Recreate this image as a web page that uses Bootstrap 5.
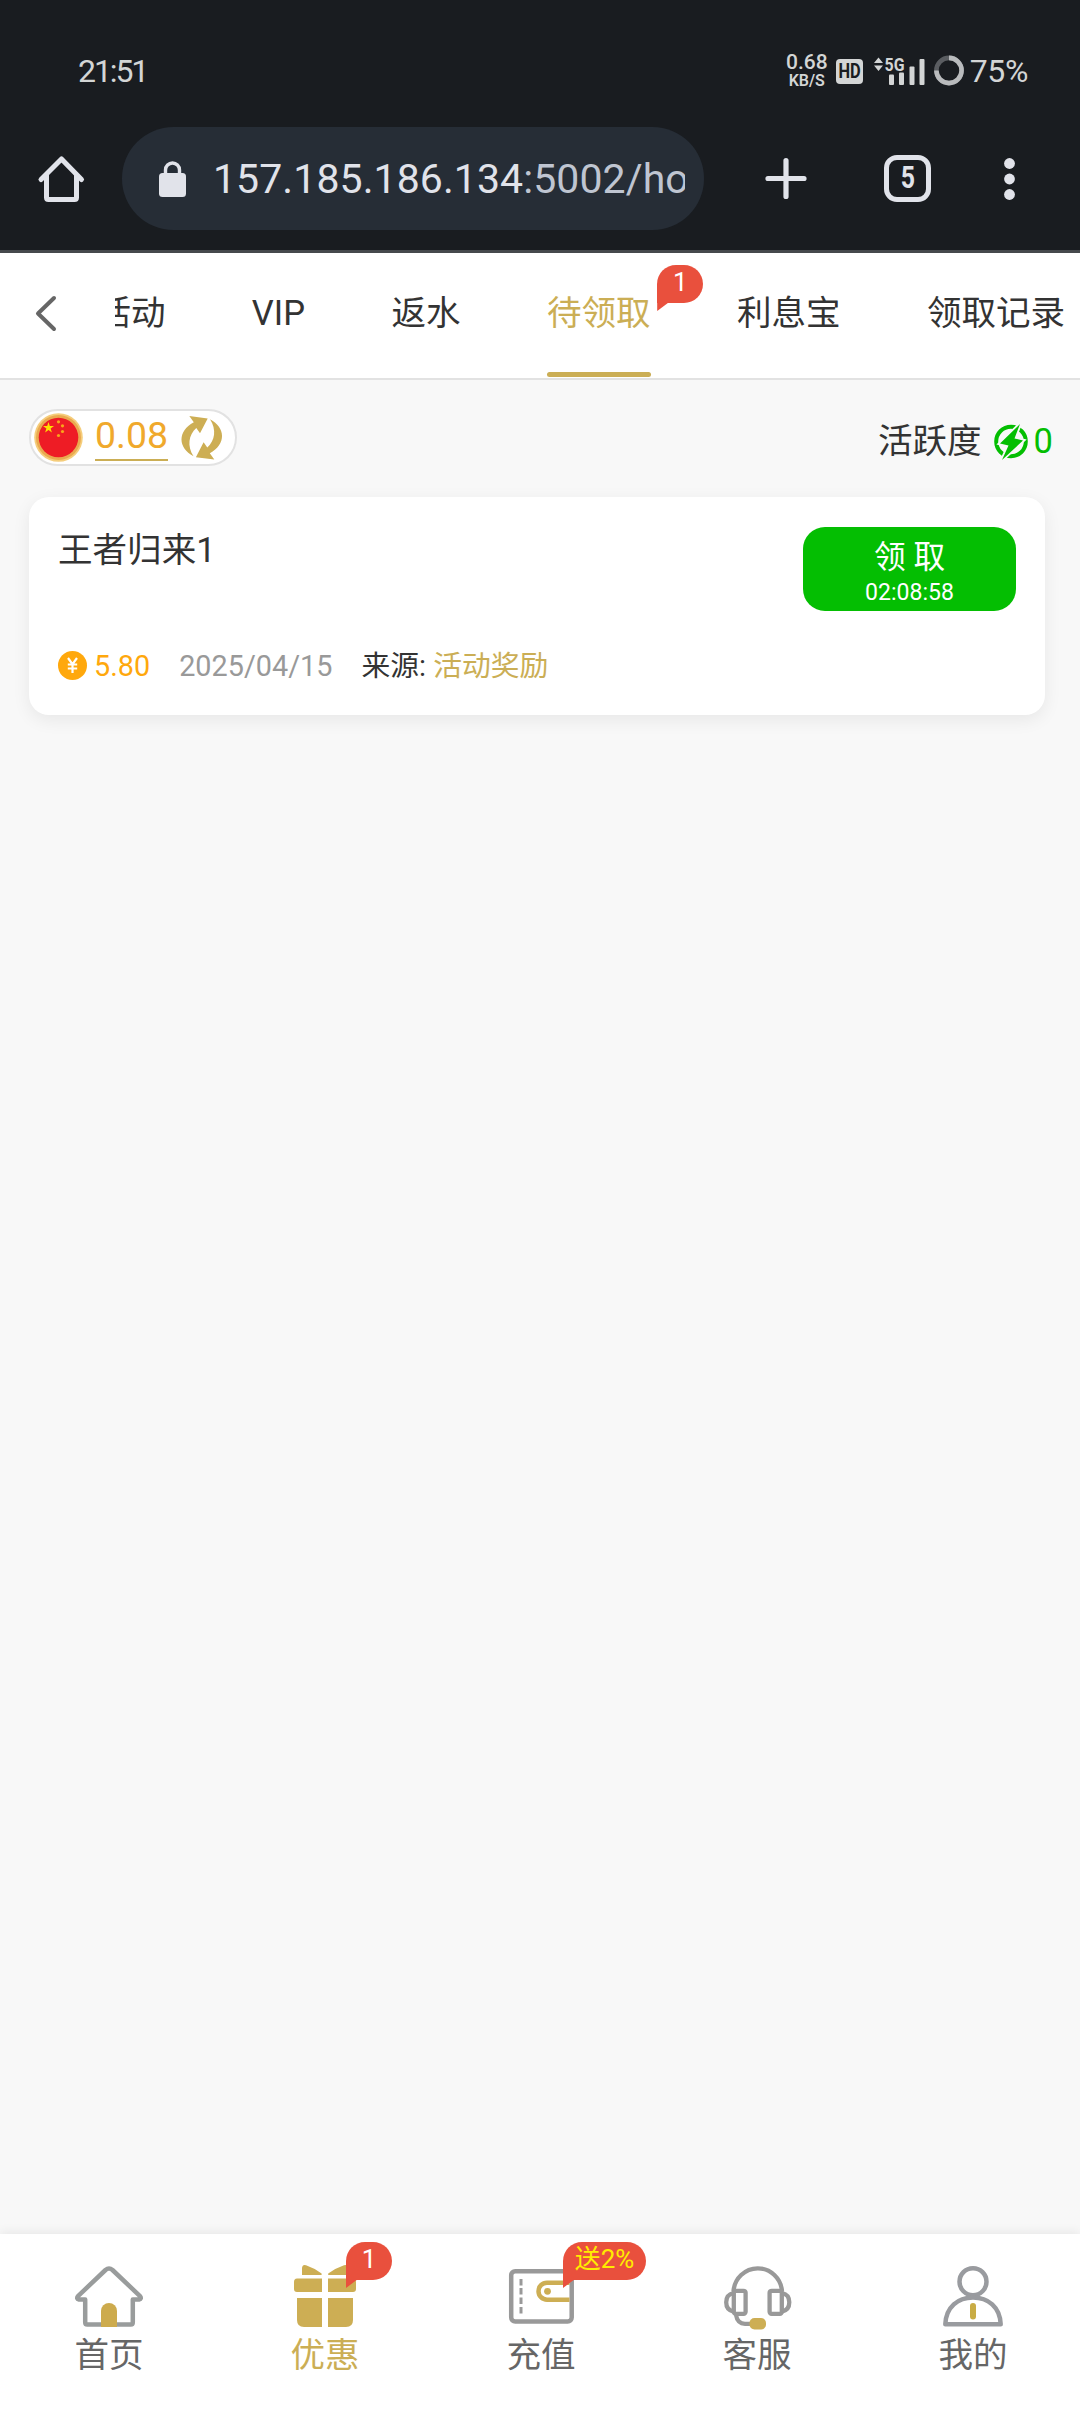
<!DOCTYPE html>
<html lang="zh-CN">
<head>
<meta charset="utf-8">
<meta name="viewport" content="width=device-width, initial-scale=1">
<title>待领取</title>
<link rel="stylesheet" href="https://cdn.jsdelivr.net/npm/bootstrap@5.3.0/dist/css/bootstrap.min.css">
<style>
:root { --gold: #cbae55; --ink: #333; }
body { font-family: Roboto, "Noto Sans CJK SC", sans-serif; font-size: 34.56px; line-height: 1.2; color: var(--ink); background: #f8f8f8; height: 2412px; overflow: hidden; }
svg { display: block; flex: none; overflow: visible; }
.gold { color: var(--gold); }

.browser-top { background: #191c20; border-bottom: 3px solid #46494d; height: 253px; color: #d3d5d5; }
.status { height: 127px; padding: 15px 52px 0 78px; }
.clock { font-size: 32px; letter-spacing: -2.1px; }
.net { font-size: 21px; line-height: 17px; width: 44px; font-weight: 500; text-align: center; margin-right: 7px; }
.net small { font-size: 16px; line-height: 15px; display: block; font-weight: 600; margin-top: 2px; }
.hd { width: 27px; height: 25px; border-radius: 4px; background: #d3d5d5; color: #191c20; font-size: 20px; font-weight: 700; line-height: 25px; margin-right: 11px; }
.hd span { display: inline-block; transform: scaleX(.82); transform-origin: center; margin: 0 -4px; }
.pct { font-size: 32px; letter-spacing: -.4px; margin-left: 6px; }
.toolbar { height: 103px; padding-left: 38px; }
.omni { margin-left: 38px; width: 582px; height: 103px; border-radius: 52px; background: #262d36; padding: 0 19px 0 37px; }
.url { font-size: 41px; margin-left: 27px; padding-top: 2px; color: #bfc5d1; white-space: nowrap; overflow: hidden; letter-spacing: .08px; }
.url b { font-weight: 400; color: #e1e3ea; }
.tabcount { width: 47px; height: 47px; border: 5px solid #e1e3ea; border-radius: 13px; color: #e1e3ea; font-size: 31px; font-weight: 700; line-height: 35px; }
.tabcount span { display: inline-block; transform: scaleX(.8); }

.page-tabs { height: 127px; background: #fff; border-bottom: 2px solid #e2e2e2; }
.back { width: 115px; padding: 0 0 5px 36px; }
.tab-clip { overflow: hidden; height: 125px; }
.tab-strip { margin-left: -61.8px; }
.tab-strip .nav-link { height: 125px; padding: 0 43.2px 4px; color: var(--ink); white-space: nowrap; display: flex; align-items: center; position: relative; }
.tab-strip .nav-link.active { color: var(--gold); }
.tab-strip .nav-link.active::after { content: ""; position: absolute; left: 43px; right: 43px; bottom: 1px; height: 5px; border-radius: 3px; background: var(--gold); }
.bubble { position: absolute; background: #e9503d; color: #fff; font-size: 26px; height: 38px; line-height: 34px; min-width: 46px; text-align: center; border-radius: 19px 19px 19px 0; }
.bubble::after { content: ""; position: absolute; left: 0; top: 37px; width: 12px; height: 9px; background: inherit; clip-path: polygon(0 0, 100% 0, 0 100%); }
.tab-strip .bubble { left: 153.5px; top: 12px; }

.summary { padding: 29px 27px 0 29px; }
.purse { width: 208px; height: 57px; border: 2px solid #e2e2e2; border-radius: 29px; background: #fff; padding: 0 12px 0 3px; }
.balance { font-size: 37.44px; line-height: 43px; border-bottom: 2.5px solid var(--gold); color: #f0a92c; margin-left: 12px; height: 47px; }
.green { color: #04be02; }

.reward { margin: 31px 35px 0 29px; height: 218px; border-radius: 20px; background: #fff; box-shadow: 0 5px 18px rgba(0,0,0,.07); padding: 30px 29px 0; }
.reward-title { margin-top: 3px; }
.claim { width: 213px; height: 84px; border-radius: 22px; background: #04be02; color: #fff; padding: 9px 0 0; font-size: 31.68px; line-height: 38px; border: 0; }
.claim:hover { background: #04be02; color: #fff; }
.claim time { font-size: 23.04px; line-height: 32px; display: block; }
.reward-meta { font-size: 28.8px; line-height: 34px; margin-top: 37px; }
.reward-meta span { padding-top: 1px; }

.bottom-nav { height: 178px; background: #fff; box-shadow: 0 -2px 10px rgba(0,0,0,.07); color: #666; padding-left: 1px; }
.bottom-nav a { color: inherit; text-decoration: none; position: relative; width: 216px; padding-top: 26px; flex: none; }
.bottom-nav a.on { color: var(--gold); }
.glyph { height: 75px; padding-top: 6px; }
.bottom-nav .bubble { left: 129px; top: 8px; }
.bottom-nav .promo { color: #ffec00; font-size: 25.92px; min-width: 83px; left: 130px; line-height: 35px; }
</style>
</head>
<body class="d-flex flex-column">

<header class="browser-top flex-shrink-0">
  <div class="status d-flex align-items-center">
    <span class="clock me-auto">21:51</span>
    <div class="net">0.68<small>KB/S</small></div>
    <div class="hd text-center"><span>HD</span></div>
    <svg width="52" height="30" viewBox="0 0 52 30" fill="#d3d5d5">
      <path d="M0 7 4.500 1.500 9 7zM0 9.500h9L4.500 15z"/>
      <text x="10.500" y="14.500" font-size="19" font-weight="700" textLength="20" lengthAdjust="spacingAndGlyphs">5G</text>
      <rect x="15" y="18.500" width="5" height="10.500" rx="1"/><rect x="25" y="16.500" width="5" height="12.500" rx="1"/><rect x="35.500" y="10.500" width="5" height="18.500" rx="1"/><rect x="45.500" y="3" width="5" height="26" rx="1"/>
    </svg>
    <svg class="ms-2" width="30" height="30" viewBox="0 0 30 30" fill="none" stroke-width="4.600">
      <circle cx="15" cy="14.500" r="12.600" stroke="#5a5d61"/><path d="M15 1.900A12.600 12.600 0 1 1 2.400 14.500" stroke="#b9bbbd"/>
    </svg>
    <span class="pct">75%</span>
  </div>
  <div class="toolbar d-flex align-items-center">
    <svg width="46" height="48" viewBox="0 0 46 48" fill="none" stroke="#e1e3ea" stroke-width="5" stroke-linejoin="round" stroke-linecap="round">
      <path d="M3 24.500 23.500 4l20 20.500M8.500 20v22.500q0 2 2 2h26q2 0 2-2V20"/>
    </svg>
    <div class="omni d-flex align-items-center">
      <svg width="27" height="36" viewBox="0 0 27 36"><rect y="12" width="27" height="24" rx="3.500" fill="#e1e3ea"/><path d="M6.500 13V9a7 7 0 0 1 14 0v4" fill="none" stroke="#e1e3ea" stroke-width="3.400"/></svg>
      <div class="url"><b>157.185.186.134</b>:5002/home</div>
    </div>
    <svg style="margin-left:61px" width="42" height="42" viewBox="0 0 42 42" stroke="#e1e3ea" stroke-width="5.200" stroke-linecap="round"><path d="M21 2.500v36M3 20.500h36"/></svg>
    <div class="tabcount text-center" style="margin-left:77px"><span>5</span></div>
    <svg style="margin-left:72px" width="12" height="44" viewBox="0 0 12 44" fill="#e1e3ea"><circle cx="6.500" cy="6.500" r="5.400"/><circle cx="6.500" cy="22" r="5.400"/><circle cx="6.500" cy="37.500" r="5.400"/></svg>
  </div>
</header>

<nav class="page-tabs d-flex flex-shrink-0">
  <div class="back d-flex align-items-center flex-shrink-0">
    <svg width="21" height="35" viewBox="0 0 21 35" fill="none" stroke="#666" stroke-width="4" stroke-linecap="round" stroke-linejoin="round"><path d="M18 2 2 17.500l16 15.500"/></svg>
  </div>
  <div class="tab-clip flex-grow-1">
    <div class="tab-strip nav flex-nowrap">
      <a class="nav-link">活动</a>
      <a class="nav-link">VIP</a>
      <a class="nav-link">返水</a>
      <a class="nav-link active">待领取<span class="bubble">1</span></a>
      <a class="nav-link">利息宝</a>
      <a class="nav-link">领取记录</a>
    </div>
  </div>
</nav>

<main class="flex-grow-1">
  <div class="summary d-flex justify-content-between align-items-start">
    <div class="purse d-flex align-items-center">
      <svg width="49" height="49" viewBox="0 0 49 49">
        <circle cx="24.500" cy="24.500" r="24.300" fill="#f5cd7b"/><circle cx="24.500" cy="24.500" r="22.500" fill="#eaa94f"/><circle cx="24.500" cy="24.500" r="19.800" fill="#ee1c25"/>
        <path fill="#ffde00" d="M14.500 9l1.300 3.900h4.200l-3.400 2.500 1.300 4-3.400-2.400-3.400 2.400 1.300-4L9 12.900h4.200z"/>
        <g fill="#f9a51a"><circle cx="24.500" cy="8.800" r="1.600"/><circle cx="28.500" cy="12.800" r="1.600"/><circle cx="28.500" cy="18.500" r="1.600"/><circle cx="24.500" cy="22.500" r="1.600"/></g>
      </svg>
      <span class="balance">0.08</span>
      <svg class="ms-auto" width="42" height="44" viewBox="0 0 42 44" fill="#cdae54">
        <path id="turn" d="M8.300 0 26.700 2.400 19 17.300 15.300 12C7.500 19 6 30 12.500 40.300-3 32-4 15.500 12.800 6.300z"/>
        <use href="#turn" transform="rotate(180 20.800 21.800)"/>
      </svg>
    </div>
    <div class="d-flex align-items-center pt-2 mt-1">
      <span>活跃度</span>
      <svg style="margin-left:12px" width="34" height="36" viewBox="0 0 34 36">
        <circle cx="17" cy="17.500" r="14.800" fill="none" stroke="#04be02" stroke-width="4"/>
        <path d="M26 0 6 19.500l8.500 2L8 36 29 16.500l-8.500-2z" fill="#04be02" stroke="#f8f8f8" stroke-width="3.600" paint-order="stroke"/>
      </svg>
      <span class="green" style="margin-left:6px">0</span>
    </div>
  </div>

  <section class="reward">
    <div class="d-flex justify-content-between align-items-start">
      <div class="reward-title">王者归来1</div>
      <button class="btn claim">领 取<time>02:08:58</time></button>
    </div>
    <div class="reward-meta d-flex align-items-center">
      <svg width="29" height="29" viewBox="0 0 29 29"><circle cx="14.500" cy="14.500" r="14.500" fill="#ffa80c"/><path d="M10 7l4.500 6.200L19 7M9.800 13.500h9.400M9.800 17.500h9.400M14.500 13v9" fill="none" stroke="#fff" stroke-width="2.200"/></svg>
      <span style="color:#ffa80c;margin-left:7px">5.80</span>
      <span style="color:#999;margin-left:29px">2025/04/15</span>
      <span style="margin-left:29px">来源: <span class="gold">活动奖励</span></span>
    </div>
  </section>
</main>

<nav class="bottom-nav d-flex flex-shrink-0">
  <a class="d-flex flex-column align-items-center">
    <div class="glyph"><svg width="68" height="61" viewBox="0 0 68 61">
      <path d="M10.200 33.500H4q-3-.8-1-3.400L30.500 4q3.500-3 7 0L65 30.100q2 2.600-1 3.400h-6.200v23q0 2-2 2H12.200q-2 0-2-2z" fill="none" stroke="#999c9c" stroke-width="4.500" stroke-linejoin="round"/>
      <path d="M26 61V45a8 8 0 0 1 16 0v16z" fill="#cdab4d"/></svg></div>
    <span>首页</span>
  </a>
  <a class="on d-flex flex-column align-items-center">
    <div class="glyph"><svg width="62" height="61" viewBox="0 1 62 61" fill="#cdae54">
      <path d="M8 10V3q.5-4 4-2.700Q20 3 27.600 8.500V10zM54 10V3q-.5-4-4-2.700Q42 3 34.200 8.500V10z"/>
      <path d="M3 13.500h25V27H3q-3 0-3-3v-7q0-3.500 3-3.500zM59 13.500H34V27h25q3 0 3-3v-7q0-3.500-3-3.500zM3 33h25v29H10q-7 0-7-7zM59 33H34v29h18q7 0 7-7z"/></svg></div>
    <span>优惠</span><span class="bubble">1</span>
  </a>
  <a class="d-flex flex-column align-items-center">
    <div class="glyph"><svg width="65" height="61" viewBox="0 -3 65 61" fill="none" stroke="#999" stroke-width="4.500">
      <rect x="2.200" y="2.200" width="60.500" height="50.300" rx="4"/>
      <path d="M12 10v6.500M12 19v6.500M12 28.500V35M12 38v6.500" stroke-width="3" stroke-linecap="butt"/>
      <path d="M60.500 13.700H38a8.500 8.500 0 0 0 0 17h22.500" stroke="#cdae54"/><circle cx="38.500" cy="22.300" r="3.400" fill="#cdae54" stroke="none"/></svg></div>
    <span>充值</span><span class="bubble promo">送2%</span>
  </a>
  <a class="d-flex flex-column align-items-center">
    <div class="glyph"><svg width="67" height="61" viewBox="0 2 67 61" fill="none" stroke="#999" stroke-width="4.300">
      <path d="M9.500 27.500A24.300 24.800 0 0 1 58 27.500"/>
      <rect x="9.800" y="26.800" width="11.800" height="23" rx="2"/><rect x="45.600" y="26.800" width="12.200" height="23" rx="2"/>
      <path d="M9.500 29q-7.300 1.500-7.300 9.300t7.300 9.300M58 29q7.300 1.500 7.300 9.300T58 47.600M12 51q1.500 8.800 9 8.800h6"/>
      <rect x="25.500" y="54" width="16.500" height="11.500" rx="5" fill="#cdae54" stroke="none"/></svg></div>
    <span>客服</span>
  </a>
  <a class="d-flex flex-column align-items-center">
    <div class="glyph"><svg width="60" height="61" viewBox="0 0 60 61" fill="none" stroke="#999b9f" stroke-width="4.500" stroke-linejoin="round">
      <circle cx="30" cy="15.700" r="13.500"/><path d="M2.300 58.300C3 41 15 31.500 30 31.500S57 41 57.700 58.300z"/>
      <path d="M30 40v10.500" stroke="#c9ac45" stroke-width="6" stroke-linecap="round"/></svg></div>
    <span>我的</span>
  </a>
</nav>

<script src="https://cdn.jsdelivr.net/npm/bootstrap@5.3.0/dist/js/bootstrap.bundle.min.js"></script>
</body>
</html>
